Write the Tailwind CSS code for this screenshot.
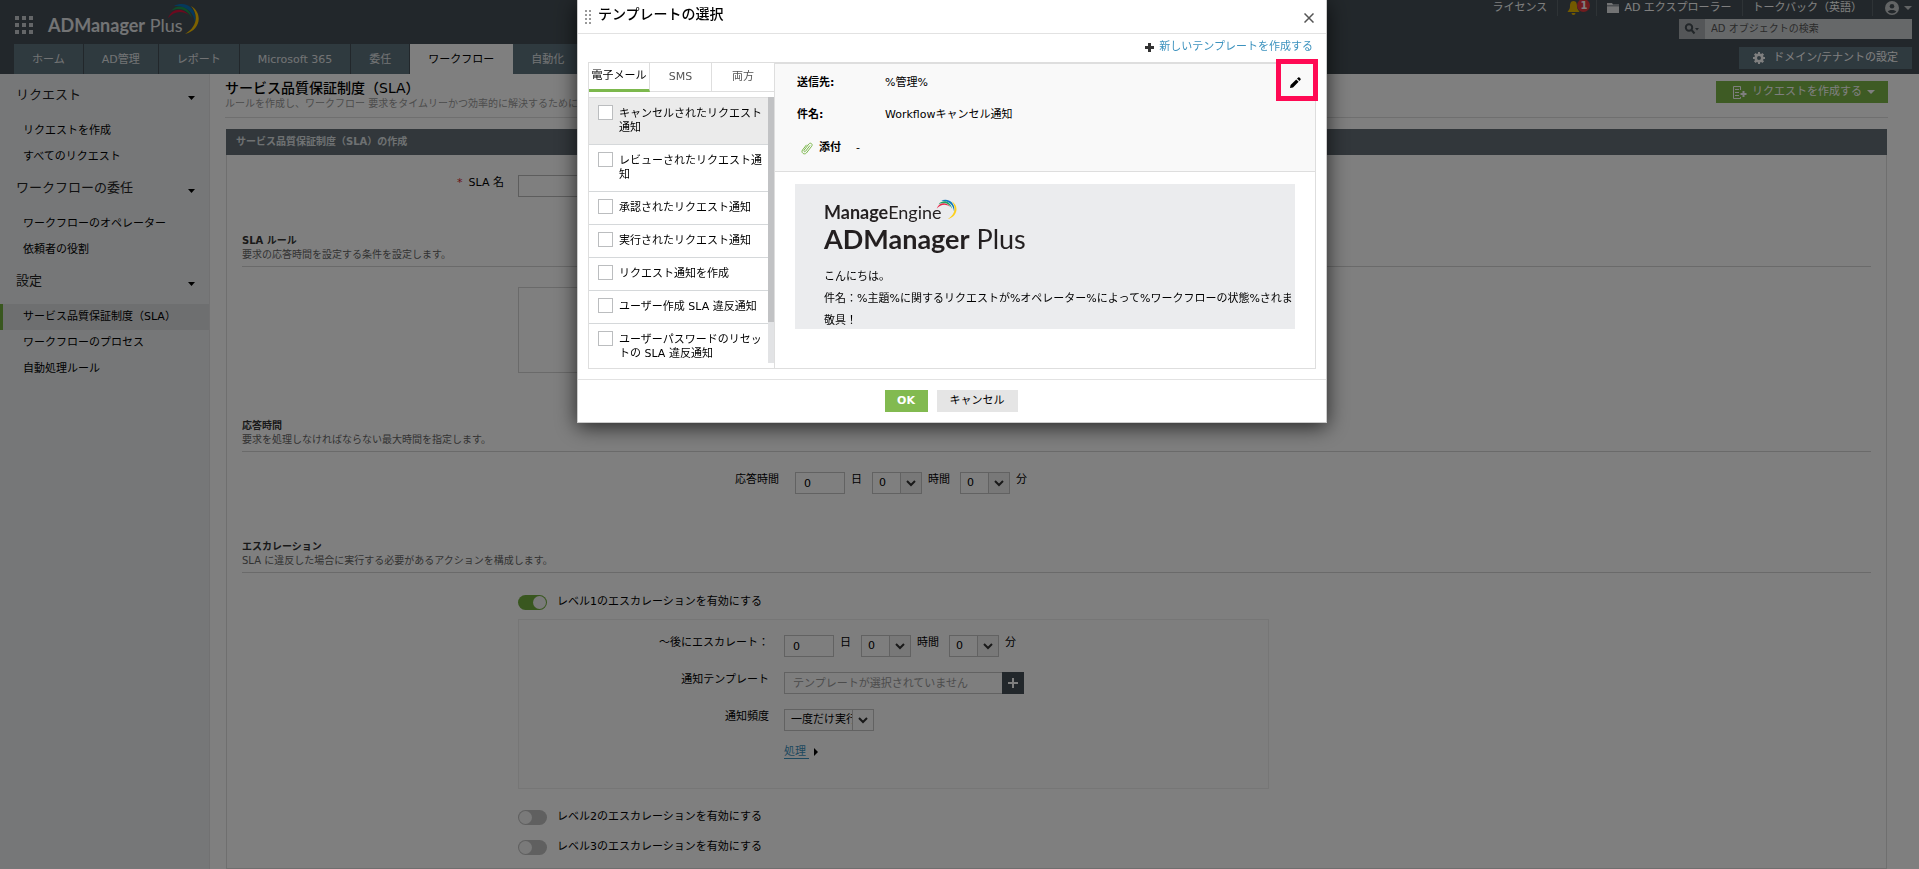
<!DOCTYPE html>
<html lang="ja">
<head>
  <meta charset="UTF-8" />
  <meta name="viewport" content="width=device-width, initial-scale=1" />
  <title>ADManager Plus</title>
  <script src="https://cdn.jsdelivr.net/npm/@tailwindcss/browser@4"></script>
  <style>
    body {
      font-family: 'DejaVu Sans', 'Noto Sans CJK JP', sans-serif;
    }
  </style>
</head>
<body class="min-h-screen flex flex-col bg-white text-[11px] leading-4 text-black overflow-hidden">

  <!-- Header -->
  <header class="flex justify-between bg-[#454f56] text-white">
    <div class="flex flex-col">
      <div class="flex items-start h-11 pl-[15px]">
        <svg class="w-[18px] h-[18px] mt-4" viewBox="0 0 18 18" fill="#c9cdd0">
          <path d="M0 0h4v4H0zM7 0h4v4H7zM14 0h4v4h-4zM0 7h4v4H0zM7 7h4v4H7zM14 7h4v4h-4zM0 14h4v4H0zM7 14h4v4H7zM14 14h4v4h-4z" />
        </svg>
        <div class="relative ml-[15px] mt-[13px] font-[Lato] text-[18px] leading-6 text-[#e6e8ea]">
          <span class="font-bold">ADManager</span> <span>Plus</span>
          <svg class="absolute -top-[10px] left-[119px] w-[34px] h-[31px]" viewBox="0 0 34 31" fill="none">
            <path d="M1 15C5 5 15 4 22 12C15 7 7 8 1 15Z" fill="#d8123c" />
            <path d="M4 8C11 0 22 3 25 15C20 6 12 4 4 8Z" fill="#1d9a50" />
            <path d="M7 3C18 -3 31 5 28 20C27 9 19 2 7 3Z" fill="#0a72b9" />
            <path d="M24 3C36 10 34 27 18 31C30 24 32 12 24 3Z" fill="#fdc500" />
          </svg>
        </div>
      </div>
      <nav class="flex h-[30px] ml-[14px] leading-[32px] text-[#e4e7e9]">
        <a href="#" class="px-[18px] bg-[#5f747f] border-r border-[#454f56]">ホーム</a>
        <a href="#" class="px-[18px] bg-[#5f747f] border-r border-[#454f56]">AD管理</a>
        <a href="#" class="px-[18px] bg-[#5f747f] border-r border-[#454f56]">レポート</a>
        <a href="#" class="px-[18px] bg-[#5f747f] border-r border-[#454f56]">Microsoft 365</a>
        <a href="#" class="px-[18px] bg-[#5f747f] border-r border-[#454f56]">委任</a>
        <a href="#" class="px-[18px] bg-white text-black border-r border-white">ワークフロー</a>
        <a href="#" class="px-[18px] bg-[#5f747f] border-r border-[#454f56]">自動化</a>
      </nav>
    </div>

    <div class="flex flex-col items-end pr-[7px]">
      <div class="flex items-center h-4 mb-[3px]">
        <a href="#" class="pr-[10px]">ライセンス</a>
        <div class="relative w-10 h-4 border-x border-[#5c666d]">
          <svg class="absolute left-[9px] top-px w-[13px] h-[14px]" viewBox="0 0 13 14" fill="#e5b400">
            <path d="M6.500 0C3.500 0 3 3 3 5.500C3 8 1.500 9 0.500 11H12.500C11.500 9 10 8 10 5.500C10 3 9.500 0 6.500 0ZM4.500 12a2 2 0 0 0 4 0Z" />
          </svg>
          <span class="absolute left-[19px] -top-px w-[13px] h-[13px] rounded-full bg-[#e0383e] text-center text-[10px] leading-[13px] font-bold">1</span>
        </div>
        <a href="#" class="flex items-center gap-[5px] px-[10px]">
          <svg class="w-3 h-[10px]" viewBox="0 0 12 10" fill="#e4e7e9"><path d="M0 0h5l1 1.500h6v1H0zM0 3.200h12V10H0z" /></svg>
          AD エクスプローラー
        </a>
        <a href="#" class="px-[10px] border-x border-[#5c666d]">トークバック（英語）</a>
        <button type="button" aria-label="アカウント" class="flex items-center gap-[5px] pl-3">
          <svg class="w-[14px] h-[14px]" viewBox="0 0 14 14"><circle cx="7" cy="7" r="7" fill="#c4c8ca" /><circle cx="7" cy="5.200" r="2.300" fill="#454f56" /><path d="M2.800 10.800C3.500 8.400 10.500 8.400 11.200 10.800A6 6 0 0 1 2.800 10.800Z" fill="#454f56" /></svg>
          <svg class="w-2 h-1" viewBox="0 0 8 4" fill="#c4c8ca"><path d="M0 0h8L4 4z" /></svg>
        </button>
      </div>
      <div class="flex h-5">
        <button type="button" aria-label="検索" class="flex items-center justify-center w-[26px] bg-[#a9adb0]">
          <svg class="w-4 h-3" viewBox="0 0 16 12" fill="none"><circle cx="5" cy="4.500" r="3.200" stroke="#444c52" stroke-width="2" /><path d="M7.500 7l3 3.500" stroke="#444c52" stroke-width="2" /><path d="M11 5h4l-2 2.500z" fill="#444c52" /></svg>
        </button>
        <input type="text" aria-label="検索" placeholder="AD オブジェクトの検索" class="w-[207px] px-[6px] bg-[#cdd0d2] text-[10px] placeholder:text-[#555]" />
      </div>
      <button type="button" class="flex items-center gap-2 h-[22px] mt-2 px-[14px] bg-[#5f747f]">
        <svg class="w-3 h-3" viewBox="0 0 12 12"><path fill="#fff" fill-rule="evenodd" d="M5 0h2v1.500l1.200.5L9.300.9l1.800 1.800L10 3.800l.5 1.200H12v2h-1.500L10 8.200l1.100 1.100-1.800 1.800L8.200 10 7 10.500V12H5v-1.500L3.800 10l-1.100 1.100L.9 9.300 2 8.200 1.500 7H0V5h1.500L2 3.800.9 2.700 2.700.9 3.800 2 5 1.500zM6 4a2 2 0 1 0 0 4 2 2 0 0 0 0-4z" /></svg>
        ドメイン/テナントの設定
      </button>
    </div>
  </header>

  <div class="flex flex-1">

    <!-- Sidebar -->
    <aside class="w-[210px] shrink-0 bg-[#edeff1] border-r border-[#e2e3e5]">
      <h2 class="flex items-center justify-between h-11 pb-[2px] pl-4 pr-[14px] text-[13px] text-[#222]">
        リクエスト
        <svg class="w-[7px] h-1 mt-[6px]" viewBox="0 0 7 4"><path d="M0 0h7L3.500 4z" /></svg>
      </h2>
      <ul class="leading-[26px]">
        <li><a href="#" class="block pl-[23px]">リクエストを作成</a></li>
        <li><a href="#" class="block pl-[23px]">すべてのリクエスト</a></li>
      </ul>
      <h2 class="flex items-center justify-between h-[41px] pb-[6px] pl-4 pr-[14px] text-[13px] text-[#222]">
        ワークフローの委任
        <svg class="w-[7px] h-1 mt-[6px]" viewBox="0 0 7 4"><path d="M0 0h7L3.500 4z" /></svg>
      </h2>
      <ul class="leading-[26px]">
        <li><a href="#" class="block pl-[23px]">ワークフローのオペレーター</a></li>
        <li><a href="#" class="block pl-[23px]">依頼者の役割</a></li>
      </ul>
      <h2 class="flex items-center justify-between h-[41px] pb-[6px] pl-4 pr-[14px] text-[13px] text-[#222]">
        設定
        <svg class="w-[7px] h-1 mt-[6px]" viewBox="0 0 7 4"><path d="M0 0h7L3.500 4z" /></svg>
      </h2>
      <ul class="leading-[26px]">
        <li><a href="#" class="block pl-5 border-l-3 border-[#72ae3f] bg-[#dddfe1]">サービス品質保証制度（SLA）</a></li>
        <li><a href="#" class="block pl-[23px]">ワークフローのプロセス</a></li>
        <li><a href="#" class="block pl-[23px]">自動処理ルール</a></li>
      </ul>
    </aside>

    <!-- Main -->
    <main class="flex-1 pl-[15px] pr-[31px] pt-[5px]">
      <div class="flex items-start justify-between pb-[6px] border-b border-[#dedede]">
        <div>
          <h1 class="text-[14px] leading-[18px] font-medium">サービス品質保証制度（SLA）</h1>
          <p class="text-[10px] leading-[14px] text-[#999]">ルールを作成し、ワークフロー 要求をタイムリーかつ効率的に解決するために必要な条件を定義します。</p>
        </div>
        <button type="button" class="flex items-center gap-[5px] h-[22px] mt-[2px] pl-[17px] pr-[13px] bg-[#7cb649] text-white">
          <svg class="w-[14px] h-[13px]" viewBox="0 0 14 13" fill="none" stroke="#fff"><path d="M7.500 4V.5h-7v12h7V11M2 3.500h4M2 6.500h4M2 9.500h4" /><path d="M10.500 5v6M7.500 8h6" stroke-width="2" /></svg>
          リクエストを作成する
          <svg class="w-2 h-1" viewBox="0 0 8 4" fill="#fff"><path d="M0 0h8L4 4z" /></svg>
        </button>
      </div>

      <section class="mt-[11px] ml-px mr-px border border-t-0 border-[#dedede] min-h-[740px]">
        <h2 class="h-[26px] -mx-px pl-[10px] bg-[#646e76] text-[10px] leading-[26px] font-bold text-[#dfe2e4]">サービス品質保証制度（SLA）の作成</h2>

        <form class="px-[15px] pt-5">
          <div class="flex items-start h-[59px]">
            <label for="sla-name" class="w-[262px] mr-[14px] text-right"><span class="mr-[6px] text-[#d3222a]">*</span>SLA 名</label>
            <input id="sla-name" type="text" class="w-[250px] h-[22px] px-2 border border-[#bbb]" />
            <label for="sla-desc" class="w-[180px] mr-[14px] text-right">説明</label>
            <textarea id="sla-desc" class="w-[250px] h-[45px] px-2 border border-[#bbb] resize"></textarea>
          </div>

          <div class="pb-1 border-b border-[#d4d4d4] text-[10px] leading-[14px]">
            <h3 class="font-bold text-[#333]">SLA ルール</h3>
            <p class="text-[#666]">要求の応答時間を設定する条件を設定します。</p>
          </div>
          <div class="w-[750px] h-[86px] mt-5 mb-[46px] ml-[276px] border border-[#d4d4d4]"></div>

          <div class="pb-1 border-b border-[#d4d4d4] text-[10px] leading-[14px]">
            <h3 class="font-bold text-[#333]">応答時間</h3>
            <p class="text-[#666]">要求を処理しなければならない最大時間を指定します。</p>
          </div>
          <div class="flex items-start mt-5 mb-[46px]">
            <label for="res-day" class="w-[537px] mr-4 text-right">応答時間</label>
            <input id="res-day" type="text" value="0" class="w-[50px] h-[22px] pl-2 border border-[#c4c4c4]" />
            <span class="ml-[6px] mr-[10px]">日</span>
            <div class="flex w-[50px] h-[22px] border border-[#c4c4c4]">
              <select aria-label="時間" class="appearance-none flex-1 min-w-0 pl-[6px]"><option>0</option></select>
              <span class="flex items-center justify-center w-[21px] bg-[#f1f1f1] border-l border-[#c4c4c4]">
                <svg class="w-[10px] h-[7px]" viewBox="0 0 10 7" fill="none" stroke="#333" stroke-width="2"><path d="M1 1l4 4 4-4" /></svg>
              </span>
            </div>
            <span class="ml-[6px] mr-[10px]">時間</span>
            <div class="flex w-[50px] h-[22px] border border-[#c4c4c4]">
              <select aria-label="分" class="appearance-none flex-1 min-w-0 pl-[6px]"><option>0</option></select>
              <span class="flex items-center justify-center w-[21px] bg-[#f1f1f1] border-l border-[#c4c4c4]">
                <svg class="w-[10px] h-[7px]" viewBox="0 0 10 7" fill="none" stroke="#333" stroke-width="2"><path d="M1 1l4 4 4-4" /></svg>
              </span>
            </div>
            <span class="ml-[6px]">分</span>
          </div>

          <div class="pb-1 border-b border-[#d4d4d4] text-[10px] leading-[14px]">
            <h3 class="font-bold text-[#333]">エスカレーション</h3>
            <p class="text-[#666]">SLA に違反した場合に実行する必要があるアクションを構成します。</p>
          </div>

          <div class="mt-[21px] ml-[276px]">
            <div class="flex items-center gap-[10px] h-4">
              <input id="level1" type="checkbox" checked class="appearance-none relative w-[29px] h-[15px] rounded-full bg-[#c0c0c0] checked:bg-[#72ae3f] before:absolute before:top-px before:left-px before:w-[13px] before:h-[13px] before:rounded-full before:bg-[#f4f4f4] checked:before:left-[15px]" />
              <label for="level1">レベル1のエスカレーションを有効にする</label>
            </div>

            <div class="flex flex-col gap-[15px] w-[751px] mt-[9px] mb-5 pt-[15px] pb-[30px] bg-[#fcfcfc] border border-[#ececec]">
              <div class="flex items-start">
                <label for="esc-day" class="w-[250px] mr-[15px] text-right">～後にエスカレート：</label>
                <input id="esc-day" type="text" value="0" class="w-[50px] h-[22px] pl-2 border border-[#c4c4c4]" />
                <span class="ml-[6px] mr-[10px]">日</span>
                <div class="flex w-[50px] h-[22px] border border-[#c4c4c4]">
                  <select aria-label="時間" class="appearance-none flex-1 min-w-0 pl-[6px]"><option>0</option></select>
                  <span class="flex items-center justify-center w-[21px] bg-[#f1f1f1] border-l border-[#c4c4c4]">
                    <svg class="w-[10px] h-[7px]" viewBox="0 0 10 7" fill="none" stroke="#333" stroke-width="2"><path d="M1 1l4 4 4-4" /></svg>
                  </span>
                </div>
                <span class="ml-[6px] mr-[10px]">時間</span>
                <div class="flex w-[50px] h-[22px] border border-[#c4c4c4]">
                  <select aria-label="分" class="appearance-none flex-1 min-w-0 pl-[6px]"><option>0</option></select>
                  <span class="flex items-center justify-center w-[21px] bg-[#f1f1f1] border-l border-[#c4c4c4]">
                    <svg class="w-[10px] h-[7px]" viewBox="0 0 10 7" fill="none" stroke="#333" stroke-width="2"><path d="M1 1l4 4 4-4" /></svg>
                  </span>
                </div>
                <span class="ml-[6px]">分</span>
              </div>
              <div class="flex items-start">
                <label for="esc-template" class="w-[250px] mr-[15px] text-right">通知テンプレート</label>
                <input id="esc-template" type="text" placeholder="テンプレートが選択されていません" class="w-[218px] h-[22px] pl-2 border border-r-0 border-[#c4c4c4] placeholder:text-[#999]" />
                <button type="button" aria-label="追加" class="flex items-center justify-center w-[22px] h-[22px] bg-[#454f56]">
                  <svg class="w-[10px] h-[10px]" viewBox="0 0 10 10" stroke="#fff" stroke-width="2"><path d="M5 0v10M0 5h10" /></svg>
                </button>
              </div>
              <div class="flex items-start">
                <label for="esc-freq" class="w-[250px] mr-[15px] text-right">通知頻度</label>
                <div class="flex w-[90px] h-[22px] border border-[#c4c4c4]">
                  <select id="esc-freq" class="appearance-none flex-1 min-w-0 pl-[6px]"><option>一度だけ実行</option></select>
                  <span class="flex items-center justify-center w-[21px] border-l border-[#c4c4c4]">
                    <svg class="w-[10px] h-[7px]" viewBox="0 0 10 7" fill="none" stroke="#333" stroke-width="2"><path d="M1 1l4 4 4-4" /></svg>
                  </span>
                </div>
              </div>
              <div class="flex items-center gap-[5px] h-3 ml-[265px]">
                <a href="#" class="pr-[3px] leading-[13px] text-[#3c92be] border-b border-[#3c92be]">処理</a>
                <svg class="w-1 h-2" viewBox="0 0 4 8"><path d="M0 0l4 4-4 4z" /></svg>
              </div>
            </div>

            <div class="flex items-center gap-[10px] h-4 mb-[14px]">
              <input id="level2" type="checkbox" class="appearance-none relative w-[29px] h-[15px] rounded-full bg-[#c0c0c0] checked:bg-[#72ae3f] before:absolute before:top-px before:left-px before:w-[13px] before:h-[13px] before:rounded-full before:bg-[#f4f4f4] checked:before:left-[15px]" />
              <label for="level2">レベル2のエスカレーションを有効にする</label>
            </div>
            <div class="flex items-center gap-[10px] h-4">
              <input id="level3" type="checkbox" class="appearance-none relative w-[29px] h-[15px] rounded-full bg-[#c0c0c0] checked:bg-[#72ae3f] before:absolute before:top-px before:left-px before:w-[13px] before:h-[13px] before:rounded-full before:bg-[#f4f4f4] checked:before:left-[15px]" />
              <label for="level3">レベル3のエスカレーションを有効にする</label>
            </div>
          </div>
        </form>
      </section>
    </main>
  </div>

  <!-- Template dialog -->
  <div class="fixed inset-0 flex items-start justify-center pr-[15px] bg-black/50">
    <div role="dialog" aria-labelledby="dialog-title" class="w-[750px] bg-white border border-t-0 border-[#ccc] shadow-[0_4px_20px_rgba(0,0,0,0.7)]">
      <div class="flex items-start h-[34px] pl-[7px] pr-3 border-b border-[#e2e2e2]">
        <svg class="w-[6px] h-[15px] mt-[10px]" viewBox="0 0 6 15" fill="#999"><path d="M0 0h2v2H0zM4 0h2v2H4zM0 4h2v2H0zM4 4h2v2H4zM0 8h2v2H0zM4 8h2v2H4zM0 12h2v2H0zM4 12h2v2H4z" /></svg>
        <h2 id="dialog-title" class="ml-[7px] mt-[5px] text-[14px] leading-[18px] font-medium">テンプレートの選択</h2>
        <button type="button" aria-label="閉じる" class="ml-auto mt-[13px]">
          <svg class="w-[10px] h-[10px]" viewBox="0 0 10 10" stroke="#555" stroke-width="1.500"><path d="M.5.5l9 9M9.500.5l-9 9" /></svg>
        </button>
      </div>

      <div class="px-[10px] pb-[10px]">
        <div class="flex items-center justify-end gap-[5px] h-7 pb-[2px] pr-[3px]">
          <svg class="w-[9px] h-[9px]" viewBox="0 0 9 9" stroke="#333" stroke-width="3"><path d="M4.500 0v9M0 4.500h9" /></svg>
          <a href="#" class="text-[#3c92be]">新しいテンプレートを作成する</a>
        </div>

        <div class="flex h-[307px] border border-[#dedede]">
          <!-- Template list -->
          <div class="w-[186px] shrink-0 border-r border-[#dedede]">
            <div class="flex h-[29px] mb-[5px] text-center text-[#555]">
              <button type="button" class="w-[61px] border-r border-r-[#dedede] border-b-3 border-b-[#7cb84d] leading-[26px] text-black">電子メール</button>
              <button type="button" class="w-[62px] border-r border-b border-[#dedede] leading-[26px]">SMS</button>
              <button type="button" class="w-[62px] border-b border-[#dedede] leading-[26px]">両方</button>
            </div>
            <div class="flex h-[266px]">
              <ul class="flex-1 overflow-hidden border-t border-[#dedede] leading-[14px]">
                <li class="flex items-start gap-[6px] pl-[9px] pt-[7px] pb-[9px] bg-[#ebebeb] border-b border-[#d5d8da]">
                  <input id="t1" type="checkbox" class="appearance-none shrink-0 w-[15px] h-[15px] bg-white border border-[#bbbdbf]" />
                  <label for="t1" class="pt-[2px]">キャンセルされたリクエスト通知</label>
                </li>
                <li class="flex items-start gap-[6px] pl-[9px] pt-[7px] pb-[9px] border-b border-[#d5d8da]">
                  <input id="t2" type="checkbox" class="appearance-none shrink-0 w-[15px] h-[15px] bg-white border border-[#bbbdbf]" />
                  <label for="t2" class="pt-[2px]">レビューされたリクエスト通知</label>
                </li>
                <li class="flex items-start gap-[6px] pl-[9px] pt-[7px] pb-[9px] border-b border-[#d5d8da]">
                  <input id="t3" type="checkbox" class="appearance-none shrink-0 w-[15px] h-[15px] bg-white border border-[#bbbdbf]" />
                  <label for="t3" class="pt-[2px]">承認されたリクエスト通知</label>
                </li>
                <li class="flex items-start gap-[6px] pl-[9px] pt-[7px] pb-[9px] border-b border-[#d5d8da]">
                  <input id="t4" type="checkbox" class="appearance-none shrink-0 w-[15px] h-[15px] bg-white border border-[#bbbdbf]" />
                  <label for="t4" class="pt-[2px]">実行されたリクエスト通知</label>
                </li>
                <li class="flex items-start gap-[6px] pl-[9px] pt-[7px] pb-[9px] border-b border-[#d5d8da]">
                  <input id="t5" type="checkbox" class="appearance-none shrink-0 w-[15px] h-[15px] bg-white border border-[#bbbdbf]" />
                  <label for="t5" class="pt-[2px]">リクエスト通知を作成</label>
                </li>
                <li class="flex items-start gap-[6px] pl-[9px] pt-[7px] pb-[9px] border-b border-[#d5d8da]">
                  <input id="t6" type="checkbox" class="appearance-none shrink-0 w-[15px] h-[15px] bg-white border border-[#bbbdbf]" />
                  <label for="t6" class="pt-[2px]">ユーザー作成 SLA 違反通知</label>
                </li>
                <li class="flex items-start gap-[6px] pl-[9px] pt-[7px] pb-[9px]">
                  <input id="t7" type="checkbox" class="appearance-none shrink-0 w-[15px] h-[15px] bg-white border border-[#bbbdbf]" />
                  <label for="t7" class="pt-[2px]">ユーザーパスワードのリセットの SLA 違反通知</label>
                </li>
              </ul>
              <div class="w-[6px] bg-[#e2e3e5]">
                <div class="h-[225px] bg-[#c1c2c4]"></div>
              </div>
            </div>
          </div>

          <!-- Template preview -->
          <div class="flex-1 min-w-0">
            <div class="relative h-[109px] pt-[11px] pl-[22px] bg-[#f9f9f9] border-t border-b border-[#dedede]">
              <dl class="grid grid-cols-[88px_1fr] gap-y-4">
                <dt class="font-bold">送信先:</dt>
                <dd>%管理%</dd>
                <dt class="font-bold">件名:</dt>
                <dd>Workflowキャンセル通知</dd>
              </dl>
              <div class="flex items-center mt-[17px] pl-1">
                <svg class="w-3 h-[13px] mr-[6px]" viewBox="0 0 12 13" fill="none" stroke="#7cb84d"><path d="M9 3.500L4.500 9.300C3.700 10.300 2.300 9.200 3.100 8.200L7.800 2C9.500 0 12.200 2.200 10.700 4.200L5.400 11C3.300 13.300-.4 10.500 1.500 8L5.500 2.800" /></svg>
                <span class="font-bold mr-[15px]">添付</span>
                <span>-</span>
              </div>
              <button type="button" aria-label="編集" class="absolute -top-[5px] -right-[3px] flex items-center justify-center w-[42px] h-[42px] border-5 border-[#ff0a54]">
                <svg class="w-[11px] h-[11px] mr-1 mt-1" viewBox="0 0 11 11"><path d="M0 11l.6-3L6.200 2.400l2.400 2.400L3 10.400zM7 1.600L8.300.4c.8-.8 3.100 1.500 2.300 2.300L9.400 4z" /></svg>
              </button>
            </div>
            <div class="h-[145px] ml-5 mr-5 mt-3 pt-[14px] pl-[29px] overflow-hidden whitespace-nowrap bg-[#ebecee]">
              <div class="relative font-[Lato] text-[18px] leading-7 text-[#231f20]">
                <span class="font-bold">Manage</span><span>Engine</span>
                <svg class="absolute top-px left-[112px] w-[22px] h-5" viewBox="0 0 34 31" fill="none">
                  <path d="M1 15C5 5 15 4 22 12C15 7 7 8 1 15Z" fill="#e8274b" />
                  <path d="M4 8C11 0 22 3 25 15C20 6 12 4 4 8Z" fill="#1fa463" />
                  <path d="M7 3C18 -3 31 5 28 20C27 9 19 2 7 3Z" fill="#1279bf" />
                  <path d="M24 3C36 10 34 27 18 31C30 24 32 12 24 3Z" fill="#fdd01c" />
                </svg>
              </div>
              <div class="font-[Lato] text-[27px] leading-[26px] text-[#231f20]"><span class="font-bold">ADManager</span> <span>Plus</span></div>
              <div class="mt-[14px] leading-[22px]">
                <p>こんにちは。</p>
                <p>件名：%主題%に関するリクエストが%オペレーター%によって%ワークフローの状態%されました。</p>
                <p>敬具！</p>
              </div>
            </div>
          </div>
        </div>
      </div>

      <div class="flex justify-center gap-[9px] h-[43px] pt-[10px] pr-[2px] border-t border-[#e2e2e2]">
        <button type="button" class="w-[43px] h-[22px] bg-[#82ba50] text-white font-bold">OK</button>
        <button type="button" class="w-[81px] h-[22px] bg-[#e5e5e5]">キャンセル</button>
      </div>
    </div>
  </div>

</body>
</html>
